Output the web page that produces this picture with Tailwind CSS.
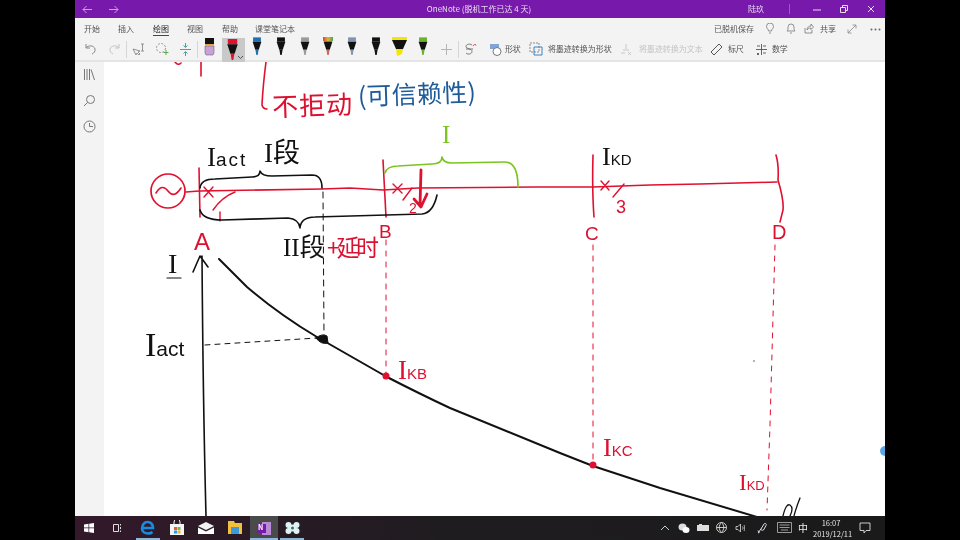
<!DOCTYPE html>
<html lang="zh">
<head>
<meta charset="utf-8">
<script src="https://cdn.jsdelivr.net/npm/@tailwindcss/browser@4"></script>
</head>
<body class="bg-black">
<svg width="0" height="0" class="absolute">
  <symbol id="pen" viewBox="0 0 16 22">
    <path d="M3.5 0h9v5h-9z" fill="currentColor"/>
    <path d="M3 5h10l-3 9H6z" fill="#111"/>
    <path d="M6.2 14h3.6l-1 6H7.200z" fill="currentColor"/>
  </symbol>
</svg>
<div class="w-[960px] h-[540px] bg-black flex justify-center overflow-hidden font-['Noto_Sans_CJK_SC',sans-serif] blur-[0.35px]">
  <div class="w-[810px] h-[540px] flex flex-col">

    <!-- title bar -->
    <div class="h-[18px] shrink-0 bg-[#7719aa] text-[#eadcf2] relative flex items-center text-[8px]">
      <svg class="absolute left-[7px] top-[5px]" width="11" height="9" viewBox="0 0 11 9" fill="none" stroke="#c9a3dd" stroke-width="1"><path d="M10 4.500H1M4.500 1 1 4.500 4.500 8"/></svg>
      <svg class="absolute left-[33px] top-[5px]" width="11" height="9" viewBox="0 0 11 9" fill="none" stroke="#c9a3dd" stroke-width="1"><path d="M1 4.500h9M6.500 1 10 4.500 6.500 8"/></svg>
      <div class="flex-1 flex justify-center"><span class="ml-[-2px]">OneNote (脱机工作已达 4 天)</span></div>
      <span class="absolute left-[673px]">陆玖</span>
      <div class="absolute left-[714px] top-[4px] w-px h-[10px] bg-[#9a5cc0]"></div>
      <svg class="absolute left-[738px] top-[5px]" width="8" height="8" viewBox="0 0 8 8"><path d="M0 5h8" stroke="#e9dcf1"/></svg>
      <svg class="absolute left-[765px] top-[5px]" width="8" height="8" viewBox="0 0 8 8" fill="none" stroke="#e9dcf1"><path d="M.5 2.500h5v5h-5zM2.500 2.500V.5h5v5h-2"/></svg>
      <svg class="absolute left-[792px] top-[5px]" width="8" height="8" viewBox="0 0 8 8" fill="none" stroke="#e9dcf1"><path d="M1 1l6 6M7 1 1 7"/></svg>
    </div>

    <!-- ribbon -->
    <div class="h-[44px] shrink-0 bg-[#f3f3f3] flex flex-col text-[#555] text-[8px] border-b-2 border-[#e4e4e4]">
      <div class="h-[20px] shrink-0 flex items-center relative">
        <span class="absolute left-[9px] top-[5px] leading-[12px]">开始</span>
        <span class="absolute left-[43px] top-[5px] leading-[12px]">插入</span>
        <span class="absolute left-[78px] top-[5px] leading-[12px] text-[#222]">绘图</span>
        <span class="absolute left-[78px] top-[17px] w-[16px] h-[1px] bg-[#7719aa]"></span>
        <span class="absolute left-[112px] top-[5px] leading-[12px]">视图</span>
        <span class="absolute left-[147px] top-[5px] leading-[12px]">帮助</span>
        <span class="absolute left-[180px] top-[5px] leading-[12px]">课堂笔记本</span>
        <span class="absolute left-[639px] top-[5px] leading-[12px]">已脱机保存</span>
        <svg class="absolute left-[690px] top-[5px]" width="10" height="11" viewBox="0 0 10 11" fill="none" stroke="#777" stroke-width=".8"><path d="M3.500 8C3.500 6 1.500 5.500 1.500 3.500a3.500 3.500 0 0 1 7 0C8.500 5.500 6.500 6 6.500 8zM4 10h2"/></svg>
        <svg class="absolute left-[711px] top-[5px]" width="10" height="11" viewBox="0 0 10 11" fill="none" stroke="#777" stroke-width=".8"><path d="M1 8h8C8 7 8 6 8 4a3 3 0 0 0-6 0c0 2 0 3-1 4zM4 10h2"/></svg>
        <svg class="absolute left-[729px] top-[5px]" width="10" height="11" viewBox="0 0 10 11" fill="none" stroke="#777" stroke-width=".8"><path d="M1 5v5h7V7M3 7c0-3 2-4 4-4V1l2.500 3L7 6.500V5C5 5 4 5.500 3 7z"/></svg>
        <span class="absolute left-[745px] top-[5px] leading-[12px]">共享</span>
        <svg class="absolute left-[772px] top-[6px]" width="10" height="10" viewBox="0 0 10 10" fill="none" stroke="#888" stroke-width=".8"><path d="M1 9l8-8M5.500 1H9v3.500M1 5.500V9h3.500"/></svg>
        <svg class="absolute left-[795px] top-[10px]" width="11" height="3" viewBox="0 0 11 3" fill="#666"><circle cx="1.500" cy="1.500" r="1"/><circle cx="5.500" cy="1.500" r="1"/><circle cx="9.500" cy="1.500" r="1"/></svg>
      </div>
      <div class="flex-1 min-h-0 flex items-center pl-[3px] relative">
        <div class="w-[24px] flex justify-center">
          <svg width="13" height="13" viewBox="0 0 13 13" fill="none" stroke="#888" stroke-width="1"><path d="M2 1v4h4M2 5c2-3 8-3 9 1 .5 2.500-1 4-3 5"/></svg>
        </div>
        <div class="w-[24px] flex justify-center">
          <svg width="13" height="13" viewBox="0 0 13 13" fill="none" stroke="#c4c4c4" stroke-width="1"><path d="M11 1v4H7M11 5C9 2 3 2 2 6c-.5 2.500 1 4 3 5"/></svg>
        </div>
        <div class="w-px h-[17px] bg-[#d5d5d5]"></div>
        <div class="w-[23px] flex justify-center">
          <svg width="13" height="13" viewBox="0 0 13 13" fill="none" stroke="#888" stroke-width=".9"><path d="M1 6l3 6 1-2 2 2 1-1-2-2 2-1zM9 1h3M10.500 1v7M9 8h3"/></svg>
        </div>
        <div class="w-[24px] flex justify-center">
          <svg width="14" height="14" viewBox="0 0 14 14" fill="none" stroke-width="1"><circle cx="6" cy="6" r="4.500" stroke="#999" stroke-dasharray="2 1.500"/><path d="M11 8v5M8.500 10.500h5" stroke="#5fa84f"/></svg>
        </div>
        <div class="w-[23px] flex justify-center">
          <svg width="13" height="15" viewBox="0 0 13 15" fill="none" stroke-width="1"><path d="M1 7.500h11" stroke="#888"/><path d="M6.500 1v4M4.500 3.500l2 2 2-2M6.500 14v-4M4.500 11.500l2-2 2 2" stroke="#4f9fa0"/></svg>
        </div>
        <div class="w-px h-[17px] bg-[#d5d5d5]"></div>

        <div class="w-[23.7px] h-[20px] mb-[4px] flex justify-center items-center">
          <svg width="11" height="18" viewBox="0 0 11 18"><path d="M1 0h9v7H1z" fill="#111"/><path d="M1 6h9v1.500H1z" fill="#e8a33a"/><path d="M1 8h9v7l-1 2H2l-1-2z" fill="#c9a0d8" stroke="#555" stroke-width=".5"/></svg>
        </div>
        <div class="w-[23.7px] h-[25px] mt-[2px] shrink-0 bg-[#c9c9c9] relative flex justify-center pt-[1px]">
          <svg class="text-[#e0102f] mr-[3px]" width="17" height="23"><use href="#pen"/></svg>
          <svg class="absolute left-[15px] top-[17px]" width="7" height="5" viewBox="0 0 7 5" fill="none" stroke="#555"><path d="M1 1l2.500 2.500L6 1"/></svg>
        </div>
        <div class="w-[23.7px] mb-[4px] flex justify-center"><svg class="text-[#1f6fb2]" width="14" height="20"><use href="#pen"/></svg></div>
        <div class="w-[23.7px] mb-[4px] flex justify-center"><svg class="text-[#111]" width="14" height="20"><use href="#pen"/></svg></div>
        <div class="w-[23.7px] mb-[4px] flex justify-center"><svg class="text-[#9a9a9a]" width="14" height="20"><use href="#pen"/></svg></div>
        <div class="w-[23.7px] mb-[4px] flex justify-center relative">
          <svg class="text-[#c9665a]" width="14" height="20"><use href="#pen"/></svg>
          <span class="absolute top-0 left-[7px] w-[10px] h-[4px] bg-[linear-gradient(90deg,#d14a32,#e3b23a,#4ba34f)]"></span>
        </div>
        <div class="w-[23.7px] mb-[4px] flex justify-center"><svg class="text-[#7e95ad]" width="14" height="20"><use href="#pen"/></svg></div>
        <div class="w-[23.7px] mb-[4px] flex justify-center"><svg class="text-[#111]" width="14" height="20"><use href="#pen"/></svg></div>
        <div class="w-[23.7px] mb-[4px] flex justify-center">
          <svg width="17" height="20" viewBox="0 0 17 20"><path d="M1 0h15v3H1z" fill="#f3e600"/><path d="M1 3h15l-4 9H5z" fill="#111"/><path d="M5 12h7l-1 5-5 2z" fill="#f3e600"/></svg>
        </div>
        <div class="w-[23.7px] mb-[4px] flex justify-center"><svg class="text-[#68b32a]" width="14" height="20"><use href="#pen"/></svg></div>
        <div class="w-[23px] flex justify-center">
          <svg width="13" height="13" viewBox="0 0 13 13" stroke="#b5b5b5"><path d="M6.500 1v11M1 6.500h11"/></svg>
        </div>
        <div class="w-px h-[17px] bg-[#d5d5d5]"></div>
        <div class="w-[23px] flex justify-center">
          <svg width="14" height="14" viewBox="0 0 14 14" fill="none" stroke-width="1"><path d="M9 3C7 1.500 3 2 3 4.500 3 7 9 6.500 9 9.500 9 12 5 13 3 11" stroke="#777"/><path d="M3 7h7" stroke="#777"/><path d="M10 4c1-2 3-2 3-.5" stroke="#d8403a"/></svg>
        </div>
        <div class="w-[22px] flex justify-end pr-[2px]">
          <svg width="13" height="13" viewBox="0 0 13 13"><path d="M1 1h9v5H1z" fill="#7fa6d6"/><circle cx="8" cy="8.500" r="4" fill="#fff" stroke="#777"/></svg>
        </div>
        <span class="w-[22px] pl-[1px]">形状</span>
        <div class="w-[21px] flex justify-center">
          <svg width="14" height="14" viewBox="0 0 14 14" fill="none" stroke-width="1"><path d="M1 1h9v9H1z" stroke="#888" stroke-dasharray="2 1"/><path d="M5 5h8v8H5z" stroke="#3b82c4"/></svg>
        </div>
        <span class="w-[64px] ml-[1px]">将墨迹转换为形状</span>
        <div class="w-[18px] flex justify-center ml-[6px]">
          <svg width="13" height="13" viewBox="0 0 13 13" fill="none" stroke="#c8c8c8"><path d="M6 1v5M3 7h6M1 10h4M8 9l3 3M11 9l-3 3"/></svg>
        </div>
        <span class="w-[64px] ml-[3px] text-[#c4c4c4]">将墨迹转换为文本</span>
        <div class="w-[18px] flex justify-center ml-[5px]">
          <svg width="13" height="13" viewBox="0 0 13 13" fill="none" stroke="#555"><path d="M1 9l8-8 3 3-8 8z"/></svg>
        </div>
        <span class="w-[26px] ml-[2px]">标尺</span>
        <div class="w-[16px] flex justify-center">
          <svg width="13" height="13" viewBox="0 0 13 13" fill="none" stroke="#555" stroke-width=".9"><path d="M1 6.500h11M6.500 1v11M2 3h3M8 3h3M2 10l2 2M4 10l-2 2M8 10h3"/></svg>
        </div>
        <span class="ml-[2px]">数学</span>
      </div>
    </div>

    <!-- main -->
    <div class="flex-1 flex min-h-0">
      <div class="w-[29px] shrink-0 bg-[#f3f3f3] flex flex-col items-center gap-[13px] pt-[6px]">
        <svg width="13" height="13" viewBox="0 0 13 13" fill="none" stroke="#777" stroke-width="1"><path d="M1.500 1v11M4 1v11M6.500 1v11M8 1.500l3.500 10.500"/></svg>
        <svg width="13" height="13" viewBox="0 0 13 13" fill="none" stroke="#777" stroke-width="1"><circle cx="7.500" cy="5.500" r="4"/><path d="M4.500 8.500 1 12"/></svg>
        <svg width="13" height="13" viewBox="0 0 13 13" fill="none" stroke="#777" stroke-width="1"><circle cx="6.500" cy="6.500" r="5.500"/><path d="M6.500 3v3.500H10"/></svg>
      </div>
      <div class="flex-1 bg-white relative overflow-hidden">
        <svg class="absolute inset-0" width="781" height="454" viewBox="104 62 781 454" fill="none" stroke-linecap="round" stroke-linejoin="round">
          <!-- top red ink -->
          <path d="M175 62Q178 66 181 63M201 62V76M266 62Q263 85 262 105Q263 109 267 109" stroke="#e0102f" stroke-width="1.600"/>
          <g transform="rotate(-2 370 100)">
            <text x="272" y="113" font-size="26" font-weight="400" textLength="80" fill="#dc1030">不拒动</text>
            <text x="358" y="105" font-size="25" font-weight="400" textLength="118" fill="#1d5c99">(可信赖性)</text>
          </g>

          <!-- red network -->
          <circle cx="168" cy="191" r="17" stroke="#e0102f" stroke-width="1.700"/>
          <path d="M156 193Q162 183 168 191T181 188" stroke="#e0102f" stroke-width="1.600"/>
          <path d="M186 192L199 191L322 189L350 188L383 190L418 188L535 187L593 187L650 185L700 184L777 182" stroke="#e0102f" stroke-width="1.600"/>
          <path d="M199 168L200 217M383 160L386 217M593 155Q592 190 594 217M776 155Q779 165 778 180Q784 200 783 210L780 222" stroke="#e0102f" stroke-width="1.600"/>
          <path d="M204 187L213 197M213 187L204 197M235 192Q222 197 213 210M220 212V221" stroke="#e0102f" stroke-width="1.400"/>
          <path d="M393 184L402 193M402 184L393 193M412 188L403 200M601 181L609 190M609 181L601 190M624 184L613 197" stroke="#e0102f" stroke-width="1.400"/>
          <path d="M421 170L420 206M414 199L421 207L427 194" stroke="#e0102f" stroke-width="2.800"/>

          <!-- braces -->
          <path d="M200 188Q201 179 215 179L252 177Q260 177 260 171Q262 176 272 176L312 175Q322 175 322 188" stroke="#111" stroke-width="1.600"/>
          <path d="M200 210Q203 220 222 220L288 218Q299 219 300 228Q301 217 315 217L422 214Q433 213 437 195" stroke="#111" stroke-width="1.600"/>
          <path d="M385 173Q387 166 398 166L432 164Q442 164 442 157Q443 163 452 163L505 162Q518 162 518 187" stroke="#7cc520" stroke-width="1.700"/>

          <!-- axis & curve -->
          <path d="M202 256Q203 400 206 516M193 272L200 256L208 267" stroke="#111" stroke-width="1.600"/>
          <path d="M167 278H181" stroke="#111" stroke-width="1.200"/>
          <path d="M219 259L247 287Q280 315 317 337L387 377Q420 394 450 408L560 453L593 466L660 488L757 517" stroke="#111" stroke-width="2"/>
          <path d="M316 338Q322 333 327 336L328 343Q321 345 316 338Z" fill="#111" stroke="#111"/>
          <path d="M323 192L324 335" stroke="#111" stroke-width="1" stroke-dasharray="6 5"/>
          <path d="M205 345L317 338" stroke="#111" stroke-width="1" stroke-dasharray="5 5"/>
          <path d="M386 240V376M593 245V465M775 245L770 425L767 510" stroke="#e0102f" stroke-width="1" stroke-dasharray="5 6"/>
          <circle cx="386" cy="376" r="3.500" fill="#e0102f"/>
          <circle cx="593" cy="465" r="3.500" fill="#e0102f"/>
          <circle cx="754" cy="361" r=".7" fill="#333"/>
          <path d="M783 516Q786 503 790 505Q794 508 790 516M800 498Q796 508 794 516" stroke="#111" stroke-width="1.300"/>

          <!-- labels -->
          <g font-family="'Liberation Serif',serif" font-weight="400">
            <text x="207" y="166" font-size="27" fill="#111">I<tspan font-size="19" letter-spacing="2" font-family="'Liberation Sans',sans-serif">act</tspan></text>
            <text x="264" y="162" font-size="27" fill="#111">I<tspan font-size="27" font-family="'Noto Sans CJK SC',sans-serif">段</tspan></text>
            <text x="283" y="256" font-size="25" fill="#111">II<tspan font-size="25" font-family="'Noto Sans CJK SC',sans-serif">段</tspan></text>
            <text x="168" y="273" font-size="28" fill="#111">I</text>
            <text x="145" y="356" font-size="34" fill="#111">I<tspan font-size="21" font-family="'Liberation Sans',sans-serif">act</tspan></text>
            <text x="442" y="143" font-size="25" fill="#7cc520">I</text>
            <text x="602" y="165" font-size="26" fill="#111">I<tspan font-size="15" font-family="'Liberation Sans',sans-serif">KD</tspan></text>
            <text x="398" y="379" font-size="27" fill="#dc1030">I<tspan font-size="15" font-family="'Liberation Sans',sans-serif">KB</tspan></text>
            <text x="603" y="456" font-size="26" fill="#dc1030">I<tspan font-size="15" font-family="'Liberation Sans',sans-serif">KC</tspan></text>
            <text x="739" y="490" font-size="23" fill="#dc1030">I<tspan font-size="13" font-family="'Liberation Sans',sans-serif">KD</tspan></text>
          </g>
          <text x="327" y="256" font-size="23" textLength="52" fill="#dc1030">+延时</text>
          <g font-family="'Liberation Sans',sans-serif" fill="#dc1030">
            <text x="194" y="250" font-size="24">A</text>
            <text x="379" y="238" font-size="19">B</text>
            <text x="585" y="240" font-size="19">C</text>
            <text x="772" y="239" font-size="20">D</text>
            <text x="409" y="213" font-size="14">2</text>
            <text x="616" y="213" font-size="18">3</text>
          </g>
        </svg>
        <div class="absolute right-[-5px] top-[384px] w-[10px] h-[10px] rounded-full bg-[#5aa7e6]"></div>
      </div>
    </div>

    <!-- taskbar -->
    <div class="h-[24px] shrink-0 bg-[linear-gradient(90deg,#33192a,#1f1c20_45%,#1a1a1a)] relative text-white text-[7.500px] flex items-center">
      <svg class="absolute left-[9px] top-[7px]" width="10" height="10" viewBox="0 0 10 10" fill="#fff"><path d="M0 1.500 4.500.8v3.800H0zM5.200.7 10 0v4.600H5.200zM0 5.300h4.500v3.900L0 8.500zM5.200 5.300H10V10l-4.800-.7z"/></svg>
      <svg class="absolute left-[37px] top-[7px]" width="11" height="10" viewBox="0 0 11 10" fill="none" stroke="#ddd"><path d="M1.500 1.500h5v7h-5zM8.500 1v1.500M8.500 4v2M8.500 7.500V9"/></svg>
      <svg class="absolute left-[65px] top-[4px]" width="15" height="15" viewBox="0 0 15 15" fill="none" stroke="#1a8ce0" stroke-width="2.600"><path d="M2 8h11C13 4 10.500 2 7.500 2S2 5 2 8.500 5 13.500 8 13.500c2 0 3.500-.5 4.500-1.500"/></svg>
      <svg class="absolute left-[95px] top-[4px]" width="14" height="15" viewBox="0 0 14 15"><path d="M0 4h14v11H0z" fill="#f5f5f5"/><path d="M4 4V2a3 3 0 0 1 6 0v2" stroke="#f5f5f5" fill="none"/><path d="M4 7h3v3H4z" fill="#e2603a"/><path d="M7.500 7h3v3h-3z" fill="#7cb93a"/><path d="M4 10.500h3v3H4z" fill="#2e97e0"/><path d="M7.500 10.500h3v3h-3z" fill="#e8b52e"/></svg>
      <svg class="absolute left-[123px] top-[6px]" width="16" height="12" viewBox="0 0 16 12"><path d="M0 4 8 0l8 4-8 4z" fill="#fff" opacity=".95"/><path d="M0 5.500 8 9.500l8-4V12H0z" fill="#fff"/></svg>
      <svg class="absolute left-[153px] top-[5px]" width="14" height="13" viewBox="0 0 14 13"><path d="M0 0h6l1 2h7v11H0z" fill="#f2c03d"/><path d="M3 6h8v7H3z" fill="#3d9ad6"/></svg>
      <div class="absolute left-[175px] top-0 w-[28px] h-[24px] bg-[#4a4a4a] flex items-center justify-center">
        <svg width="15" height="15" viewBox="0 0 15 15"><path d="M5 1h9v13H5z" fill="#b98ad6"/><path d="M0 3h9v9H0z" fill="#7719aa"/></svg>
        <span class="absolute left-[8px] top-[4px] text-[7px] leading-[14px] font-bold text-white">N</span>
      </div>
      <svg class="absolute left-[210px] top-[5px]" width="15" height="14" viewBox="0 0 15 14" fill="#dff3f5"><circle cx="7.500" cy="7" r="3.500"/><circle cx="3.500" cy="4" r="3"/><circle cx="11.500" cy="4" r="3"/><circle cx="3.500" cy="10" r="3"/><circle cx="11.500" cy="10" r="3"/><circle cx="7.500" cy="7" r="1.500" fill="#3b6e78"/></svg>
      <div class="absolute left-[61px] bottom-0 w-[24px] h-[2px] bg-[#8fb7d6]"></div>
      <div class="absolute left-[175px] bottom-0 w-[28px] h-[2px] bg-[#8fb7d6]"></div>
      <div class="absolute left-[205px] bottom-0 w-[24px] h-[2px] bg-[#8fb7d6]"></div>

      <svg class="absolute left-[585px] top-[8px]" width="10" height="7" viewBox="0 0 10 7" fill="none" stroke="#ccc"><path d="M1 6l4-4 4 4"/></svg>
      <svg class="absolute left-[603px] top-[6px]" width="12" height="12" viewBox="0 0 12 12" fill="#ddd"><ellipse cx="4.500" cy="5" rx="4" ry="3.500"/><ellipse cx="8" cy="8" rx="3.500" ry="3" fill="#fff"/></svg>
      <svg class="absolute left-[622px] top-[7px]" width="12" height="9" viewBox="0 0 12 9" fill="#ddd"><path d="M0 2h2V1h3v1h7v6H0z"/></svg>
      <svg class="absolute left-[641px] top-[6px]" width="11" height="11" viewBox="0 0 11 11" fill="none" stroke="#ddd" stroke-width=".9"><circle cx="5.500" cy="5.500" r="5"/><path d="M.5 5.500h10M5.500.5c-3 3-3 7 0 10M5.500.5c3 3 3 7 0 10"/></svg>
      <svg class="absolute left-[660px] top-[7px]" width="10" height="10" viewBox="0 0 10 10" fill="none" stroke="#ccc" stroke-width=".9"><path d="M1 3.500h2L5.500 1v8L3 6.500H1zM7.500 3.500c.7 1 .7 2 0 3M9 2c1 2 1 4 0 6"/></svg>
      <svg class="absolute left-[682px] top-[6px]" width="11" height="12" viewBox="0 0 11 12" fill="none" stroke="#ddd"><path d="M1 11c2 0 1-3 3-4l3-5c1-1.500 3 0 2 1.500L6.500 8C5 9 3 7 4 7M1 8.500 2 11"/></svg>
      <svg class="absolute left-[702px] top-[6px]" width="15" height="11" viewBox="0 0 15 11" fill="none" stroke="#bbb" stroke-width=".8"><path d="M.5.500h14v10H.5zM2.500 3h10M2.500 5.500h10M4 8h7"/></svg>
      <span class="absolute left-[723px] top-[5px] text-[10px] leading-[14px] text-[#eee]">中</span>
      <div class="absolute left-[738px] top-[1px] w-[36px] text-center leading-[11px] text-[#e4e4e4]">
        <div>16:07</div>
        <div>2019/12/11</div>
      </div>
      <svg class="absolute left-[784px] top-[6px]" width="12" height="12" viewBox="0 0 12 12" fill="none" stroke="#ddd" stroke-width=".9"><path d="M1 1h10v7.500H7L5 11V8.500H1z"/></svg>
    </div>
  </div>
</div>
</body>
</html>
